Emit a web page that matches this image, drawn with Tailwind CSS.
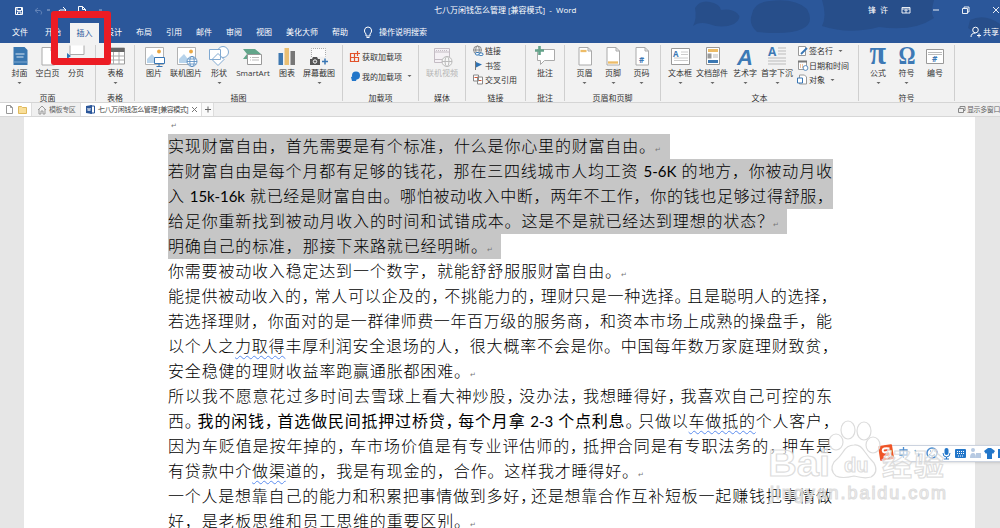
<!DOCTYPE html>
<html lang="zh-CN"><head><meta charset="utf-8"><title>Word</title>
<script src="https://cdn.jsdelivr.net/npm/@tailwindcss/browser@4"></script></head>
<body class="w-[1000px] h-[528px] overflow-hidden bg-[#e6e6e6] font-['Open_Sans','Noto_Sans_CJK_SC',sans-serif] text-[8px] leading-[12px] text-[#333] relative">
<header class="relative h-[43px] bg-[#2b579a] text-white overflow-hidden">
 <svg class="absolute inset-0" width="1000" height="43"><g fill="#274e8a"><path d="M695 8q5-8 15-6q10 2 11 8q10-2 16 3q6 5-3 11q-12 5-25 0q-10-3-16 2q4-7 2-18z"/><path d="M752 14q2-12 18-13q25-3 37 8q8 14-5 20q-12 6-45 3q-9-8-5-18z"/><path d="M822 0h112q-4 14 0 18q-20 14-55 9q-30 8-57-1q5-10 0-26z"/><path d="M970 20q15-7 30 4v6q-20 8-32-2z"/></g></svg>
 <div class="relative h-[21px] flex items-center whitespace-nowrap">
  <svg class="shrink-0" width="110" height="21" fill="none" stroke="#fff"><path d="M15.500 7.500h7v7h-7zM17 7.500v3h4.500v-3M17.500 14.500v-2.500h3.500v2.500"/><path d="M38 8l-3 2.500 3 2.500M35 10.500h5q3 1 1 4" stroke="#6283b8"/><path d="M63 7l3 3-3 3M66 10h-6q-3 1-1 4M78.500 6.500h4l3 3v6h-7zM82.500 6.500v3h3"/><path d="M47 10h3M99 10h3" stroke="#9fb3d4"/></svg>
  <div class="w-[434px] pl-[324px] -mt-[1px] flex gap-[2px]"><span>七八万闲钱怎么管理</span><span>[兼容模式]</span><span>&nbsp;-&nbsp; Word</span></div>
  <span class="ml-[324px] w-[22px] -mt-px tracking-[1px]">锋 许</span>
  <svg class="shrink-0" width="110" height="21" fill="none" stroke="#fff" stroke-width=".9"><path d="M12 7.500h8v5.500h-8zM12 9h8M16 13v-3M14.500 11l1.500-1.500 1.500 1.500M43 10h6M72.500 8.500h5v5h-5zM74 8.500v-1.500h5v5h-1.500M103 7l6 6M109 7l-6 6"/></svg>
 </div>
 <nav class="relative h-[22px] flex items-center whitespace-nowrap">
  <div class="w-[45px] pl-3">文件</div><div class="w-[25px]">开始</div><div class="w-[29px] h-[20px] mt-[2px] bg-[#f2f2f2] text-[#2b579a] text-center leading-[19px]">插入</div>
  <div class="w-[37px] pl-[7px]">设计</div><div class="w-[30px]">布局</div><div class="w-[30px]">引用</div><div class="w-[30px]">邮件</div><div class="w-[30px]">审阅</div><div class="w-[30px]">视图</div><div class="w-[46px]">美化大师</div><div class="w-[31px]">帮助</div>
  <svg width="16" height="14" fill="none" stroke="#fff"><path d="M3 9Q1 7 1.500 5Q2 2 5 2T8.500 5Q9 7 7 9v2H3zM3.500 12.500h3"/></svg><span>操作说明搜索</span>
  <svg class="ml-[543px] shrink-0" width="13" height="12" fill="none" stroke="#fff"><circle cx="5.500" cy="4" r="2.800"/><path d="M1 11q0-4 4.500-4M7 9.500h4M9 7.500v4"/></svg><span>共享</span>
 </nav>
</header>
<section id="ribbon" class="h-[60px] bg-[#f2f2f2] border-b border-[#d5d5d5] whitespace-nowrap flex"></section>
<div class="h-[14px] bg-[#efefef] border-b border-[#d7d7d7] flex items-center text-[7px] text-[#666] whitespace-nowrap">
 <svg class="shrink-0 bg-white" width="31" height="13" fill="none"><path d="M6.500 2.500h4l2 2v6h-6zM10.500 2.500v2h2" stroke="#999"/><path d="M18.500 3.500h3l1 1h4v6h-8z" fill="#f9df9a" stroke="#dfb95d"/></svg>
 <div class="w-[50px] h-[13px] bg-[#f0f0f0] border-x border-[#ddd] flex items-center pl-[5px]"><svg width="12" height="10" fill="none" stroke="#999"><path d="M1 5l4-4 4 4M2 4v5h2v-3h2v3h2V4"/></svg><span class="tracking-[-.4px]">模板专区</span></div>
 <div class="w-[120px] h-[13px] bg-white flex items-center pl-[5px] text-[#444]"><svg class="mr-[3px] shrink-0" width="9" height="9"><path d="M4 1h4.500v7H4z" fill="#fff" stroke="#2b579a"/><path d="M0 1l6-1v9l-6-1z" fill="#2b579a"/><path d="M1.500 3l.7 3 .8-3 .8 3 .7-3" fill="none" stroke="#fff" stroke-width=".6"/></svg><span class="w-[93px] tracking-[-.45px]">七八万闲钱怎么管理 [兼容模式]</span><svg class="shrink-0" width="7" height="7" stroke="#777"><path d="M1 1l5 5M6 1L1 6"/></svg></div>
 <div class="w-[13px] h-[13px] bg-[#fafafa] border-x border-[#ddd]"><svg width="11" height="13" stroke="#666"><path d="M3 6.500h6M6 3.500v6"/></svg></div>
 <svg class="ml-[743px] shrink-0" width="10" height="9" fill="none" stroke="#888"><path d="M1.500 3.500h5v4h-5zM3 3V1.500h5v4H7"/></svg><span class="tracking-[-.4px]">显示多窗口</span>
</div>
<main class="ml-6 w-[951px] h-[411px] overflow-hidden bg-white pl-[144px] text-[16px] leading-[24px] font-['Lato','Noto_Sans_CJK_SC',sans-serif] font-light text-black">
 <div class="h-[17px] text-[7px] leading-[17px] pl-[3px] text-[#777]">↵</div>
 <div id="doc"></div>
</main>
<div class="absolute left-[51px] top-[11px] w-[60px] h-[54px] border-[7px] border-[#ec1c24] rounded-[3px]"></div>
<div class="absolute left-[884px] top-[445px] w-[120px] h-[17px] bg-white border border-[#ccd3df] shadow-sm"></div>
<svg class="absolute left-[760px] top-[415px]" width="240" height="100" fill="none">
 <g transform="rotate(-9 126 37)"><rect x="119" y="30" width="14" height="15" rx="1" fill="#ef5426"/><path d="M130 34q-7-2-7 1t4 2 3 3-7 1" stroke="#fff" stroke-width="2"/></g>
 <path d="M140 35h7v5h-7zM143.500 32v11M155 35l1 2M158 38q2 1 0 4" stroke="#4c8dd0" stroke-width="1.300"/><circle cx="172" cy="38" r="5" stroke="#4c8dd0" stroke-width="1.500"/><path d="M169 39q3 4 6 0M170 36h1M174 36h1" stroke="#4c8dd0"/>
 <rect x="184.500" y="33" width="4" height="7" rx="2" fill="#2276c9"/><path d="M183 38q0 4 3.500 4t3.500-4M186.500 42v2M184 44h5" stroke="#2276c9"/>
 <rect x="195" y="34" width="11" height="9" rx="1" fill="#2276c9"/><path d="M197 36.500h8M197 38.500h8M198 41h5" stroke="#fff" stroke-dasharray="1 1"/>
 <g fill="#b6c9e2"><circle cx="213" cy="35" r="2"/><path d="M210 43q0-5 3-5t3 5zM216 38h5v5h-5z"/></g><path d="M224 36l4-3h3l4 3-2 3-1-1v6h-5v-6l-1 1z" fill="#2276c9"/><path d="M239 34v9" stroke="#2276c9" stroke-width="2"/>
 <g fill="#fff" fill-opacity=".65" stroke="#dcdcdc" stroke-width="1.200"><ellipse cx="76" cy="27" rx="7" ry="8"/><ellipse cx="88" cy="15" rx="7" ry="9"/><ellipse cx="104" cy="16" rx="7" ry="9"/><ellipse cx="113" cy="30" rx="7" ry="8"/><path d="M94 30q6-1 11 7 4 6 9 11 5 9-3 14-6 2-17-1-12 3-18 0-7-6-2-14 6-5 9-10 4-7 11-7z"/></g>
 <g fill="#fff" fill-opacity=".6" stroke="#d8d8d8" stroke-opacity=".85" stroke-width="1.200" font-family="Liberation Sans" font-weight="bold"><text x="8" y="61" font-size="37" textLength="62" lengthAdjust="spacingAndGlyphs">Bai</text><text x="84" y="57" font-size="20">du</text><text x="122" y="60" font-size="30" font-family="Noto Sans CJK SC" textLength="62">经验</text><text x="10" y="84" font-size="18" font-weight="normal" textLength="176">jingyan.baidu.com</text></g>
</svg>
<script>
const T=(x,y,s,t,o='')=>`<text x="${x}" y="${y}" font-size="${s}" fill="#3d79b5" font-weight="bold" ${o}>${t}</text>`;
const serif='font-family="Liberation Serif" style="font-weight:bold" lengthAdjust="spacingAndGlyphs"';
const page=x=>`<path d="M${x} 47.500h9l3.500 3.500v14h-12.500zM${x+9} 47.500v3.500h3.500" fill="#fff" stroke="#aaa"/>`;
const photo=x=>`<g transform="translate(${x})"><path d="M145.500 47.500h18v17h-18z" fill="#fff" stroke="#b2b2b2"/><path d="M147 63v-4l5-5 7 9z" fill="#b7d3eb"/><circle cx="159" cy="51.500" r="1.900" fill="#eaa844"/></g>`;
// icon coordinates share the window's coordinate space
const I={
cover:'<path d="M13 47h11l3 3v15H13z" fill="#3a77b0"/><path d="M15 54h9M16 57h7" stroke="#d8e6f2"/><path d="M13 62h14" stroke="#7ea9d0"/>',
blank:page(41.5),
brk:'<path d="M70 45.500v9h14v-9M70 65v-5h14v5" fill="#fff" stroke="#aaa"/><path d="M67 53l4 3-4 3z" fill="#2e75b6"/>',
table:'<path d="M107 48h17v16h-17z" fill="#fff" stroke="#999"/><path d="M107 48h17v4h-17z" fill="#666"/><path d="M107 56h17M107 60h17M113 52v12M118.500 52v12" stroke="#aaa"/>',
pic:photo(0)+'<path d="M154.500 57.500h10v6h-10zM159 64v2M156.500 66.500h6" fill="#fff" stroke="#3876b4"/>',
opic:photo(32)+'<g stroke="#4f87bd" stroke-width=".8"><circle cx="192" cy="61.500" r="5" fill="#fff"/><ellipse cx="192" cy="61.500" rx="2.200" ry="5"/><path d="M187 61.500h10M188 59h8M188 64h8"/></g>',
shape:'<g fill="#fff" stroke="#80a9d1"><circle cx="223" cy="52" r="5.500"/><path d="M209.500 49.500h11v10h-11zM218 53.500l6 6-6 6-6-6z"/></g>',
smart:'<path d="M243 49h12l6 5h-9l-3 5h-6l4-5z" fill="#62a58a"/><path d="M247.500 54.500h14v10h-14z" fill="#fff" stroke="#999"/><path d="M252 57.500h7M252 60h7M250 57.500h1M250 60h1" stroke="#bbb"/>',
chart:'<path d="M278.500 53h4.500v12h-4.500z" fill="#3e78b1"/><path d="M284.500 48h4.500v17h-4.500z" fill="#eabf73"/><path d="M290.500 51h4.500v14h-4.500z" fill="#777"/>',
shot:'<path d="M311.500 57v-8.500h14v8" fill="#fbfbfb" stroke="#aaa" stroke-dasharray="1 1"/><path d="M310 59h2l1-2h4l1 2h2v6h-10z" fill="#555"/><circle cx="315" cy="61.500" r="1.700" stroke="#fff"/><path d="M325 58.500v6M322 61.500h6" stroke="#3876b4" stroke-width="1.500"/>',
get:'<path d="M350.500 53.500h4v4h-4zM350.500 57.500h4v4h-4zM354.500 57.500h4v4h-4zM357.500 51v5M355 53.500h5" stroke="#e2532b" stroke-width="1.200"/>',
mine:'<circle cx="356" cy="75.500" r="4" fill="#2276c9"/><path d="M351 77l3-1 3 2-1 3h-4z" fill="#2276c9"/>',
video:'<g stroke="#c4bcc4"><path d="M434.500 48.500h15v14h-15zM434.500 52h15M434.500 59.500h15" fill="#f5f1f5"/><path d="M436 50.500h12" stroke-dasharray="1 1"/><g stroke="#bbb"><circle cx="447" cy="61.500" r="5" fill="#f7f7f7"/><ellipse cx="447" cy="61.500" rx="2" ry="5"/><path d="M442 61.500h10"/></g></g>',
link:'<g stroke="#777" stroke-width=".8"><circle cx="477.500" cy="50" r="4"/><ellipse cx="477.500" cy="50" rx="1.800" ry="4"/><path d="M473.500 50h8"/></g><rect x="475.500" y="52.500" width="4" height="2.500" rx="1.200" fill="#fff" stroke="#2d72b4"/><rect x="479" y="53" width="4" height="2.500" rx="1.200" fill="#fff" stroke="#2d72b4"/>',
mark:'<path d="M475.500 60v9" stroke="#777"/><path d="M476 61l6 2.500-6 3z" fill="#2d72b4"/>',
cross:'<path d="M473.500 74.500h5v6h-5zM477.500 76.500h5v7h-5z" fill="#fff" stroke="#888"/><path d="M474.500 77h3M479 80h2.500" stroke="#d65532"/>',
note:'<path d="M537.500 49.500h17v11h-10l-4 4v-4h-3z" fill="#fff" stroke="#aaa"/><path d="M539.500 46v9M535 50.500h9" stroke="#64a38a" stroke-width="2.600"/>',
head:page(578.5)+'<path d="M580 51h6" stroke="#edbc67" stroke-width="2.300"/>',
foot:page(607)+'<path d="M608 62.500h10" stroke="#edbc67" stroke-width="2.300"/>',
num:page(635.5)+T(638.5,63,8,'#'),
box:'<path d="M671.500 48.500h18v16h-18z" fill="#fff" stroke="#999"/><path d="M681 52h7M681 54.500h7M674 58h14M674 60.500h14" stroke="#ccc"/>'+T(673,56.5,8,'A'),
parts:'<path d="M706.500 47.500h13v17h-13z" fill="#fff" stroke="#999"/><path d="M708 50.500h10" stroke="#edbc67" stroke-width="3"/><path d="M707.500 53.500h4v5h-4z" fill="#999"/><path d="M713 55h5M713 57h5" stroke="#bbb"/><path d="M708 61.500h10" stroke="#3b77b2" stroke-width="3"/>',
art:T(737,65,22,'A','font-style="italic" font-family="Liberation Sans"'),
drop:'<path d="M778 48h8M778 51h8M778 54h8M768 58h18M768 61h18M768 64h18" stroke="#bbb"/>'+T(768,56,12,'A'),
sign:'<path d="M798.500 46.500h7v9h-7z" fill="#fff" stroke="#999"/><path d="M801 54l6-6" stroke="#3876b4" stroke-width="1.800"/>',
date:'<path d="M798.500 60.500h8v8h-8z" fill="#fff" stroke="#999"/><path d="M798 60.500h9" stroke="#777" stroke-width="2"/><path d="M800 64h3M800 66h3" stroke="#e48c44" stroke-dasharray="1 1"/><circle cx="805.500" cy="67" r="2.400" fill="#fff" stroke="#3876b4" stroke-width=".8"/>',
obj:'<path d="M799.500 74.500h5l2 2v7h-7z" fill="#fff" stroke="#999"/><path d="M797.500 77.500h5v5h-5z" fill="#fff" stroke="#3876b4"/>',
pi:T(869.5,64,33,'π',serif+' textLength="16.500"'),omega:T(898,64,25,'Ω',serif+' textLength="17"'),
no:'<path d="M926.500 49.500h17v14h-17z" fill="#fff" stroke="#999"/><path d="M928 52.500h14M928 54.500h14" stroke="#bbb"/>'+T(932,62,8,'#','font-style="italic"')};
const caret='<svg width="5" height="3"><path d="M.500 0h4l-2 2z" fill="#666"/></svg>';
// big tool: label, cell width, icon, icon centre, has menu
const big=(t,w,i,c,m,dim)=>`<div class="flex flex-col items-center shrink-0" style="width:${w}px"><svg class="overflow-visible shrink-0" width="24" height="24" viewBox="${c-12} 43 24 24" fill="none">${I[i]}</svg><span class="leading-[12px] ${dim?'text-[#b5b5b5]':''}">${t}</span><span class="h-[6px] flex items-end">${m?caret:''}</span></div>`;
// small tool: label, icon, icon left, icon centre y, has menu
const row=(t,i,x,y,m)=>`<div class="flex items-center h-[14.5px]"><svg class="overflow-visible shrink-0" width="13" height="12" viewBox="${x} ${y-6} 13 12" fill="none">${I[i]}</svg><span>${t}</span>${m?'<span class="ml-[5px] flex">'+caret+'</span>':''}</div>`;
const group=(name,w,pl,body)=>`<div class="flex flex-col shrink-0 border-r border-[#cfcfcf] mt-[2px] h-[56px]" style="width:${w}px"><div class="flex shrink-0 h-[49px] -mt-[2px]" style="padding-left:${pl}px">${body}</div><div class="text-center leading-[12px]">${name}</div></div>`;
document.getElementById('ribbon').innerHTML=
group('页面',96,6,big('封面',27,'cover',19.5,1)+big('空白页',29,'blank',47.5)+big('分页',28,'brk',76))+
group('表格',39,0,big('表格',39,'table',115.5,1))+
group('插图',208,4,big('图片',30,'pic',154)+big('联机图片',34,'opic',186)+big('形状',32,'shape',219,1)+big('SmartArt',36,'smart',253)+big('图表',32,'chart',287)+big('屏幕截图',32,'shot',319,1))+
group('加载项',76,6,`<div class="flex flex-col gap-[5px] pt-[7px]">${row('获取加载项','get',349,57)}${row('我的加载项','mine',349,77,1)}</div>`)+
group('媒体',47,0,big('联机视频',46,'video',442,0,1))+
group('链接',60,6,`<div class="flex flex-col pt-[1px]">${row('链接','link',472,51)}${row('书签','mark',472,65)}${row('交叉引用','cross',472,79.5)}</div>`)+
group('批注',39,0,big('批注',38,'note',545))+
group('页眉和页脚',96,5.5,big('页眉',28,'head',584.5,1)+big('页脚',29,'foot',613,1)+big('页码',28,'num',641.5,1))+
group('文本',198,3,big('文本框',32,'box',680,1)+big('文档部件',32,'parts',712,1)+big('艺术字',34,'art',745,1)+big('首字下沉',30,'drop',777,1)+`<div class="flex flex-col pt-[1px] pl-[4px]">${row('签名行','sign',796,51,1)}${row('日期和时间','date',796,65)}${row('对象','obj',796,79.5,1)}</div>`)+
group('符号',96,5,big('公式',28,'pi',878,1)+big('符号',29,'omega',906.5,1)+big('编号',28,'no',935));
const n=c=>`<span class="tracking-[-4px]">${c}</span>`;
const e=t=>`<span class="underline decoration-wavy decoration-[#5b8def] decoration-[0.7px] underline-offset-[3px]">${t}</span>`;
// [html, text width, selection width, paragraph end]
const lines=[
["实现财富自由，首先需要是有个标准，什么是你心里的财富自由。",487,502,1],
["若财富自由是每个月都有足够的钱花，那在三四线城市人均工资 <span class='font-normal text-[15px]'>5-6K</span> 的地方，你被动月收",664,665],
["入 <span class='font-normal text-[15px]'>15k-16k</span> 就已经是财富自由。哪怕被动收入中断，两年不工作，你的钱也足够过得舒服，",665,665],
["给足你重新找到被动月收入的时间和试错成本。这是不是就已经达到理想的状态？",605,619,1],
["明确自己的标准，那接下来路就已经明晰。",319,333,1],
["你需要被动收入稳定达到一个数字，就能舒舒服服财富自由。",453,0,1],
["能提供被动收入的"+n("，")+"常人可以企及的"+n("，")+"不挑能力的"+n("，")+"理财只是一种选择"+n("。")+"且是聪明人的选择，",669],
["若选择理财，你面对的是一群律师费一年百万级的服务商，和资本市场上成熟的操盘手，能",664],
["以个人之"+e("力取得")+"丰厚利润安全退场的人，很大概率不会是你。中国每年数万家庭理财致贫，",670],
["安全稳健的理财收益率跑赢通胀都困难。",302,0,1],
["所以我不愿意花过多时间去雪球上看大神炒股"+n("，")+"没办法"+n("，")+"我想睡得好"+n("，")+"我喜欢自己可控的东",664],
["西"+n("。")+"<b>我的闲钱"+n("，")+"首选做民间抵押过桥贷"+n("，")+"每个月拿 <span class='text-[15px]'>2-3</span> 个点利息</b>"+n("。")+"只做以"+e("车做抵的")+"个人客户，",671],
["因为车贬值是按年掉的"+n("，")+"车市场价值是有专业评估师的"+n("，")+"抵押合同是有专职法务的"+n("，")+"押车是",664],
["有贷款中介"+e("做渠")+"道的，我是有现金的，合作。这样我才睡得好。",470,0,1],
["一个人是想靠自己的能力和积累把事情做到多好<span class='tracking-[-6px]'>，</span>还是想靠合作互补短板一起赚钱把事情做",664],
["好，是老板思维和员工思维的重要区别。",302,0,1]];
document.getElementById('doc').innerHTML=lines.map(([h,w,s,p])=>`<div class="h-[25px] flex ${s?'bg-[#c6c6c6]':''}" style="width:${s||w+20}px"><div class="shrink-0 whitespace-nowrap text-justify [text-align-last:justify]" style="width:${w}px">${h}</div>${p?'<span class="text-[7px] pt-[3px] text-[#777]">↵</span>':''}</div>`).join('');
</script>
</body></html>
